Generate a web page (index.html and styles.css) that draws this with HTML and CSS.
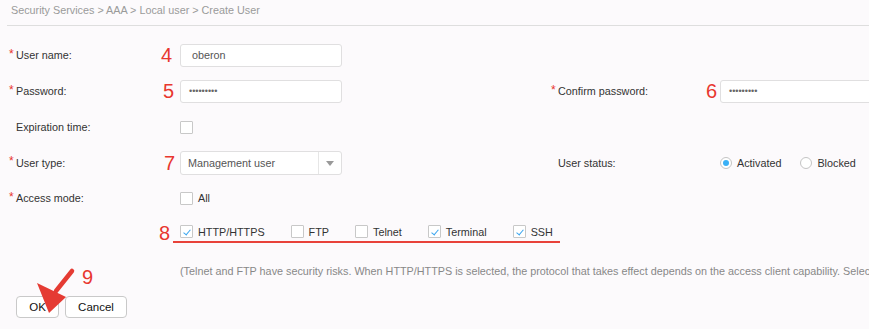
FILE: index.html
```html
<!DOCTYPE html>
<html lang="en">
<head>
    <meta charset="UTF-8">
    <title>Create User</title>
    <link rel="stylesheet" href="styles.css">
</head>
<body>
    <div class="crumb">Security Services &gt; AAA &gt; Local user &gt; Create User</div>

    <div class="form">
        <!-- user name -->
        <div class="label"><span class="req">*</span>User name:<span class="mark mark-4">4</span></div>
        <div class="field"><div class="text-input">oberon</div></div>
        <div></div>
        <div></div>

        <!-- passwords -->
        <div class="label"><span class="req">*</span>Password:<span class="mark mark-5">5</span></div>
        <div class="field"><div class="text-input dots">•••••••••</div></div>
        <div class="label"><span class="req">*</span>Confirm password:<span class="mark mark-6">6</span></div>
        <div class="field"><div class="text-input dots">•••••••••</div></div>

        <!-- expiration -->
        <div class="label"><span class="req"></span>Expiration time:</div>
        <div class="field"><span class="check"></span></div>
        <div></div>
        <div></div>

        <!-- user type / status -->
        <div class="label"><span class="req">*</span>User type:<span class="mark mark-7">7</span></div>
        <div class="field">
            <div class="select">
                <span class="select-text">Management user</span>
                <span class="select-arrow"></span>
            </div>
        </div>
        <div class="label"><span class="req"></span>User status:</div>
        <div class="field radios">
            <span class="radio-item"><span class="radio on"></span>Activated</span>
            <span class="radio-item"><span class="radio"></span>Blocked</span>
        </div>

        <!-- access mode -->
        <div class="label"><span class="req">*</span>Access mode:</div>
        <div class="field"><span class="check-item"><span class="check"></span>All</span></div>
        <div></div>
        <div></div>

        <div class="label"><span class="mark mark-8">8</span></div>
        <div class="protocol-cell">
            <div class="protocols">
                <span class="check-item"><span class="check on"></span>HTTP/HTTPS</span>
                <span class="check-item"><span class="check"></span>FTP</span>
                <span class="check-item"><span class="check"></span>Telnet</span>
                <span class="check-item"><span class="check on"></span>Terminal</span>
                <span class="check-item"><span class="check on"></span>SSH</span>
            </div>
        </div>
    </div>

    <div class="note">(Telnet and FTP have security risks. When HTTP/HTTPS is selected, the protocol that takes effect depends on the access client capability. Select the protocols as required.)</div>

    <div class="actions">
        <button class="btn btn-ok">OK</button>
        <button class="btn btn-cancel">Cancel</button>
    </div>

    <!-- annotation: step 9 -->
    <span class="mark mark-9">9</span>
    <svg class="arrow" width="869" height="329" viewBox="0 0 869 329">
        <line x1="72" y1="271" x2="56" y2="291" stroke="#e53b33" stroke-width="4.5" stroke-linecap="round"/>
        <polygon points="37,283 66,297 49,313" fill="#e53b33"/>
    </svg>
</body>
</html>
```

FILE: styles.css
```css
* {
    margin: 0;
    padding: 0;
    box-sizing: border-box;
}

html, body {
    overflow: hidden;
}

body {
    font-family: 'Liberation Sans', Arial, sans-serif;
    font-size: 10.8px;
    color: #333;
    background-color: #fcfafc;
    width: 869px;
    height: 329px;
    position: relative;
}

.crumb {
    margin-left: 7px;
    height: 26px;
    padding: 4px 0 0 4px;
    color: #9a9a9a;
    border-bottom: 1px solid #dedede;
}

.form {
    margin-top: 11px;
    padding-left: 9px;
    display: grid;
    grid-template-columns: 171px 371px 169px 1fr;
    grid-template-rows: 36px 36px 36px 35px 36px 34px;
}

.label {
    display: flex;
    align-items: center;
    white-space: nowrap;
}

.req {
    width: 7px;
    font-size: 12px;
    color: #e8342c;
    align-self: center;
    margin-top: -3px;
    flex-shrink: 0;
}

.mark {
    margin-left: auto;
    font-size: 20px;
    line-height: 20px;
    color: #e8372f;
}

.mark-4 { margin-right: 8px; }
.mark-5 { margin-right: 6px; }
.mark-6 { margin-right: 3px; }
.mark-7 { margin-right: 5px; }
.mark-8 { margin-right: 10px; }

.field {
    display: flex;
    align-items: center;
    white-space: nowrap;
}

.text-input {
    width: 162px;
    height: 23px;
    line-height: 21px;
    padding-left: 11px;
    border: 1px solid #e0dfe0;
    border-radius: 3px;
    background: #fff;
    color: #555;
    flex-shrink: 0;
}

.text-input.dots {
    padding-left: 8px;
    font-size: 9px;
    color: #666;
}

.select {
    width: 162px;
    height: 24px;
    border: 1px solid #e0dfe0;
    border-radius: 3px;
    background: #fff;
    display: flex;
    align-items: center;
}

.select-text {
    flex: 1;
    padding-left: 7px;
    color: #555;
}

.select-arrow {
    width: 23px;
    height: 100%;
    border-left: 1px solid #e6e6e6;
    position: relative;
}

.select-arrow::after {
    content: "";
    position: absolute;
    left: 7px;
    top: 9px;
    border-left: 4px solid transparent;
    border-right: 4px solid transparent;
    border-top: 5px solid #999;
}

.check-item {
    display: inline-flex;
    align-items: center;
    gap: 5px;
    color: #333;
}

.check {
    width: 13px;
    height: 13px;
    border: 1px solid #c8c8c8;
    border-radius: 1px;
    background: #fff;
    position: relative;
    flex-shrink: 0;
}

.check.on::after {
    content: "";
    position: absolute;
    left: 4px;
    top: 2px;
    width: 3px;
    height: 6px;
    border-right: 1.8px solid #3aa5ef;
    border-bottom: 1.8px solid #3aa5ef;
    transform: rotate(40deg);
}

.radios {
    gap: 19px;
}

.radio-item {
    display: inline-flex;
    align-items: center;
    gap: 5px;
    color: #333;
}

.radio {
    width: 12px;
    height: 12px;
    border: 1px solid #c4c4c4;
    border-radius: 50%;
    background: #fff;
    display: flex;
    align-items: center;
    justify-content: center;
}

.radio.on::after {
    content: "";
    width: 6px;
    height: 6px;
    border-radius: 50%;
    background: #3ab0f6;
}

.protocol-cell {
    grid-column: 2 / 5;
    align-self: start;
    margin-top: 9px;
}

.protocols {
    display: flex;
    gap: 26px;
    width: 387px;
    margin-left: -7px;
    padding: 0 0 3px 7px;
    border-bottom: 2px solid #e8423a;
}

.note {
    margin-top: 14px;
    padding-left: 180px;
    line-height: 14px;
    color: #888;
    white-space: nowrap;
}

.actions {
    margin-top: 18px;
    padding-left: 16px;
    display: flex;
    gap: 6px;
}

.btn {
    height: 22px;
    border: 1px solid #c9c9c9;
    border-radius: 4px;
    background: #fff;
    font-family: inherit;
    font-size: 11.5px;
    color: #111;
}

.btn-ok { width: 43px; }
.btn-cancel { width: 62px; }

.mark-9 {
    position: absolute;
    left: 82px;
    top: 267px;
    margin: 0;
}

.arrow {
    position: absolute;
    left: 0;
    top: 0;
    pointer-events: none;
}
```
